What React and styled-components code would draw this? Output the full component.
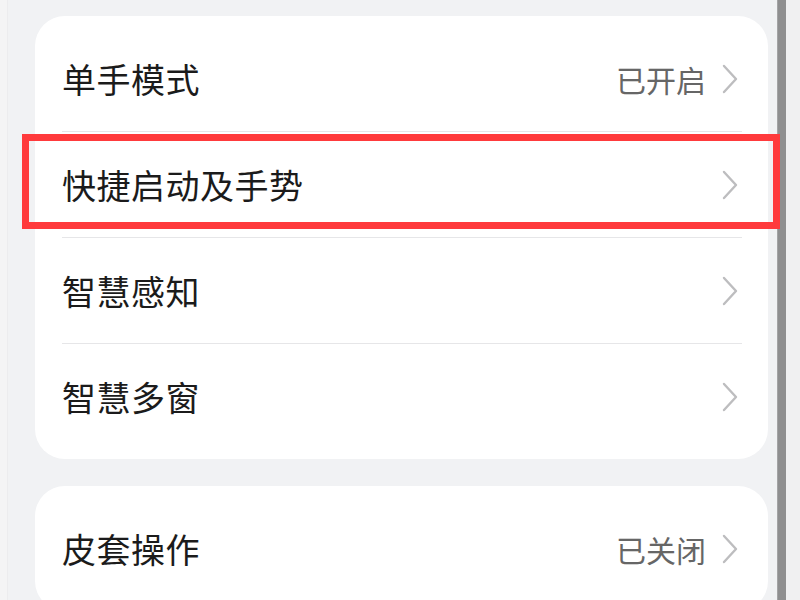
import React from "react";
import styled, { createGlobalStyle } from "styled-components";

const GlobalStyle = createGlobalStyle`
  html, body {
    margin: 0;
    padding: 0;
    background: #f1f2f4;
    overflow: hidden;
  }
  * {
    box-sizing: border-box;
  }
`;

const Screen = styled.div`
  display: flex;
  width: 800px;
  height: 600px;
  background: #f1f2f4;
  font-family: "Noto Sans CJK SC", "Noto Sans", sans-serif;
  overflow: hidden;
`;

const EdgeStrip = styled.div`
  width: 8px;
  flex-shrink: 0;
  background: #f4f4f5;
  border-right: 1px solid #ececee;
`;

const Content = styled.div`
  flex: 1;
  display: flex;
  flex-direction: column;
  gap: 27px;
  padding: 16px 9px 0 27px;
`;

const ScrollBar = styled.div`
  width: 9px;
  flex-shrink: 0;
  background: #8f8f90;
  border-left: 1px solid #a4a4a5;
`;

const RightGutter = styled.div`
  width: 14px;
  flex-shrink: 0;
  background: #f0f0f1;
`;

const Card = styled.div`
  background: #ffffff;
  border-radius: 30px;
  padding: 10px 0 9px;
  display: flex;
  flex-direction: column;
  flex-shrink: 0;
`;

const Row = styled.div`
  position: relative;
  display: flex;
  align-items: center;
  height: 106px;
  padding: 0 30px 0 27px;

  &::before {
    content: "";
    display: ${(p) => (p.$last ? "none" : "block")};
    position: absolute;
    left: 27px;
    right: 26px;
    bottom: 0;
    height: 1px;
    background: #e6e6e8;
  }

  &::after {
    content: "";
    display: ${(p) => (p.$highlight ? "block" : "none")};
    position: absolute;
    top: 2px;
    bottom: 9px;
    left: -13px;
    right: -12px;
    border: 7px solid #ff3a3c;
    pointer-events: none;
  }
`;

const Title = styled.span`
  flex: 1;
  font-size: 34px;
  font-weight: 400;
  color: #1b1b1b;
  letter-spacing: 0.5px;
  line-height: 1;
`;

const Value = styled.span`
  font-size: 30px;
  color: #666666;
  margin-right: 16px;
  line-height: 1;
`;

const Chevron = () => (
  <svg width="16" height="30" viewBox="0 0 16 30" fill="none">
    <path
      d="M2 2 L14 15 L2 28"
      stroke="#bdbdbf"
      strokeWidth="2.4"
      strokeLinecap="round"
      strokeLinejoin="round"
    />
  </svg>
);

const SettingRow = ({ title, value, highlight, last }) => (
  <Row $highlight={highlight} $last={last}>
    <Title>{title}</Title>
    {value && <Value>{value}</Value>}
    <Chevron />
  </Row>
);

const App = () => (
  <>
    <GlobalStyle />
    <Screen>
      <EdgeStrip />
      <Content>
        <Card>
          <SettingRow title="单手模式" value="已开启" />
          <SettingRow title="快捷启动及手势" highlight />
          <SettingRow title="智慧感知" />
          <SettingRow title="智慧多窗" last />
        </Card>
        <Card>
          <SettingRow title="皮套操作" value="已关闭" />
        </Card>
      </Content>
      <ScrollBar />
      <RightGutter />
    </Screen>
  </>
);

export default App;
